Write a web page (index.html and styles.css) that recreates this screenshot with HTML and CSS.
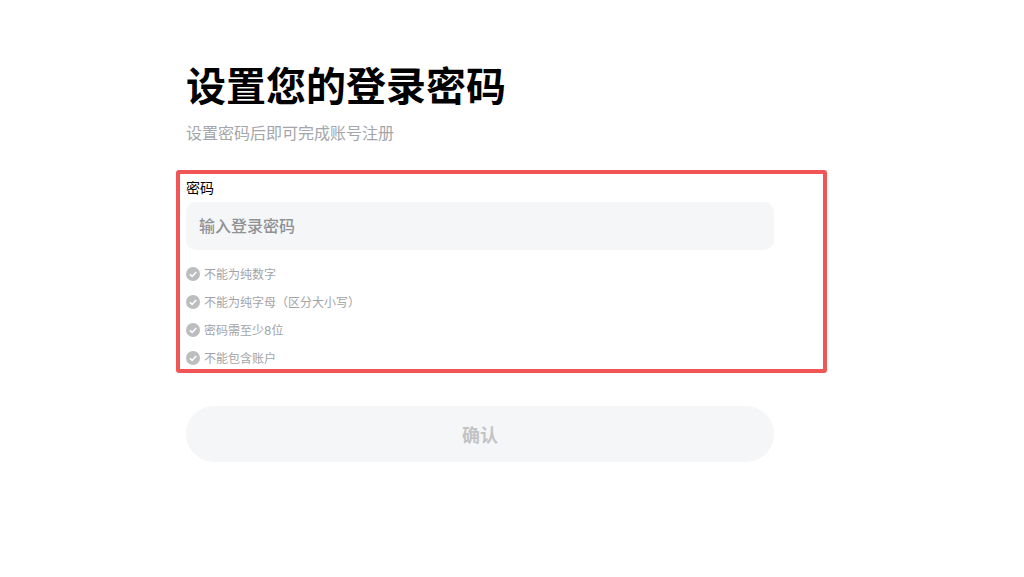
FILE: index.html
```html
<!DOCTYPE html>
<html lang="zh-CN">
<head>
    <meta charset="UTF-8">
    <meta name="viewport" content="width=device-width, initial-scale=1.0">
    <title>设置您的登录密码</title>
    <link rel="stylesheet" href="styles.css">
</head>
<body>
    <div class="page">
        <h1>设置您的登录密码</h1>
        <p class="subtitle">设置密码后即可完成账号注册</p>

        <div class="highlight">
            <label class="field-label" for="password">密码</label>
            <input class="field-input" id="password" type="password" placeholder="输入登录密码">
            <ul class="rules">
                <li>
                    <svg class="check" viewBox="0 0 14 14"><circle cx="7" cy="7" r="7" fill="#bcbdbf"/><path d="M3.8 7.2l2.3 2.2 4.1-4.4" fill="none" stroke="#fff" stroke-width="1.5"/></svg>
                    不能为纯数字
                </li>
                <li>
                    <svg class="check" viewBox="0 0 14 14"><circle cx="7" cy="7" r="7" fill="#bcbdbf"/><path d="M3.8 7.2l2.3 2.2 4.1-4.4" fill="none" stroke="#fff" stroke-width="1.5"/></svg>
                    不能为纯字母（区分大小写）
                </li>
                <li>
                    <svg class="check" viewBox="0 0 14 14"><circle cx="7" cy="7" r="7" fill="#bcbdbf"/><path d="M3.8 7.2l2.3 2.2 4.1-4.4" fill="none" stroke="#fff" stroke-width="1.5"/></svg>
                    密码需至少8位
                </li>
                <li>
                    <svg class="check" viewBox="0 0 14 14"><circle cx="7" cy="7" r="7" fill="#bcbdbf"/><path d="M3.8 7.2l2.3 2.2 4.1-4.4" fill="none" stroke="#fff" stroke-width="1.5"/></svg>
                    不能包含账户
                </li>
            </ul>
        </div>

        <button class="submit" disabled>确认</button>
    </div>
</body>
</html>
```

FILE: styles.css
```css
* {
    box-sizing: border-box;
}
html, body {
    height: 100%;
}
body {
    margin: 0;
    background-color: #ffffff;
    color: #000000;
    font-family: "Inter", "Noto Sans CJK SC", sans-serif;
    overflow: hidden;
}
.page {
    width: 588px;
    margin-left: 186px;
    padding-top: 62px;
}
h1 {
    margin: 0;
    font-size: 40px;
    line-height: 50px;
    font-weight: 700;
}
.subtitle {
    margin: 9px 0 0;
    font-size: 16px;
    line-height: 24px;
    color: #a4a6ab;
}
.highlight {
    width: 651px;
    height: 203px;
    margin: 25px 0 0 -10px;
    padding: 5px 6px 0;
    border: 4px solid #f25555;
    border-radius: 3px;
}
.field-label {
    display: block;
    font-size: 14px;
    line-height: 18px;
    padding-bottom: 5px;
}
.field-input {
    display: block;
    width: 588px;
    height: 48px;
    padding: 0 13px;
    border: none;
    border-radius: 10px;
    background-color: #f5f6f8;
    font-family: inherit;
    font-size: 16px;
    font-weight: 500;
}
.field-input::placeholder {
    color: #8f9194;
    opacity: 1;
}
.rules {
    list-style: none;
    margin: 9px 0 0;
    padding: 0;
}
.rules li {
    display: flex;
    align-items: center;
    gap: 4px;
    height: 28px;
    font-size: 12px;
    color: #a2a4a8;
}
.check {
    width: 14px;
    height: 14px;
    margin-top: 1px;
    flex-shrink: 0;
}
.submit {
    display: block;
    width: 588px;
    height: 56px;
    margin-top: 33px;
    border: none;
    border-radius: 28px;
    background-color: #f5f6f8;
    color: #c2c3c5;
    font-family: inherit;
    font-size: 18px;
    font-weight: 700;
}
```
